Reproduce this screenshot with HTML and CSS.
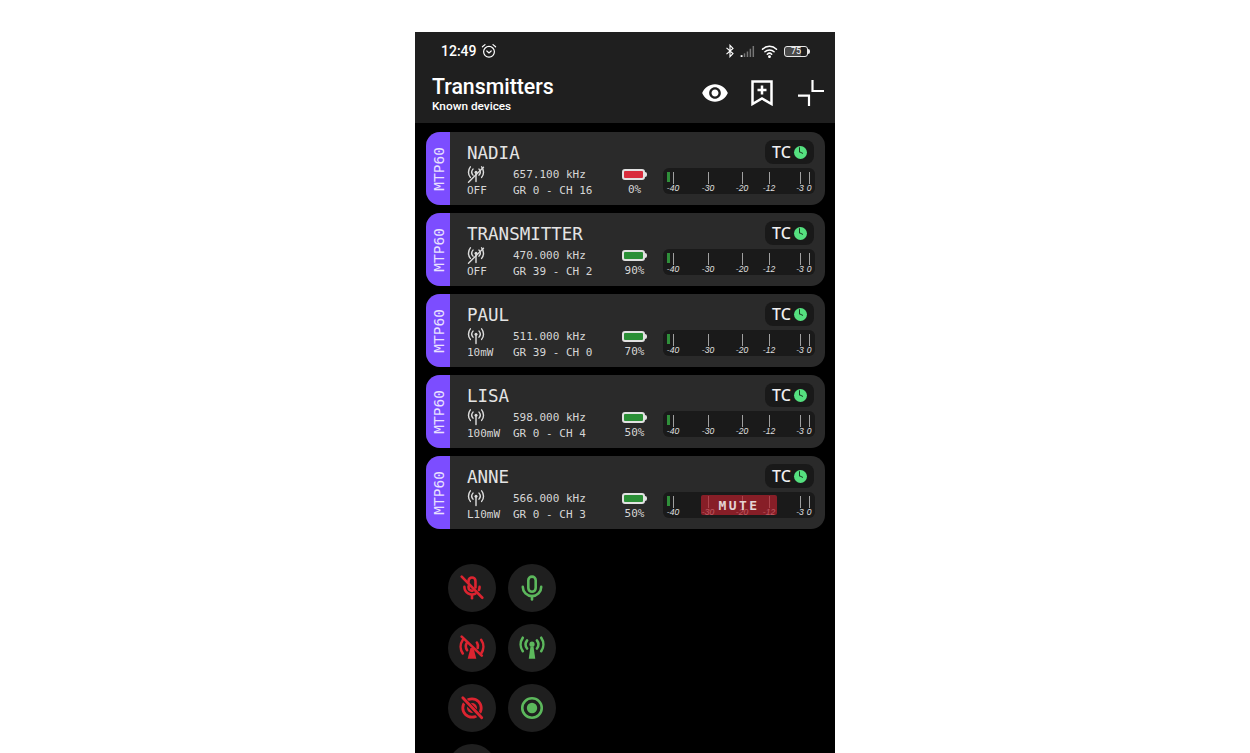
FILE: index.html
```html
<!DOCTYPE html>
<html lang="en">
<head>
    <meta charset="UTF-8">
    <meta name="viewport" content="width=device-width, initial-scale=1.0">
    <title>Transmitters</title>
    <link rel="stylesheet" href="styles.css">
</head>
<body>
    <svg class="icon-defs" width="0" height="0">
        <symbol id="ant-on" viewBox="0 0 24 24">
            <g fill="none" stroke="currentColor" stroke-width="1.9" stroke-linecap="round">
                <path d="M12 10v12"/>
                <path d="M8 5.5a6 6 0 0 0 0 8"/>
                <path d="M16 5.5a6 6 0 0 1 0 8"/>
                <path d="M4.5 2.5a11 11 0 0 0 0 14"/>
                <path d="M19.5 2.5a11 11 0 0 1 0 14"/>
            </g>
            <circle cx="12" cy="9.5" r="2" fill="currentColor"/>
        </symbol>
        <symbol id="ant-off" viewBox="0 0 24 24">
            <use href="#ant-on"/>
            <path d="M2 23 22 3" stroke="currentColor" stroke-width="1.8" stroke-linecap="round"/>
        </symbol>
    </svg>

    <div class="phone">
        <header class="app-header">
            <div class="status-bar">
                <span class="clock">12:49</span>
                <svg class="alarm" viewBox="0 0 16 16" fill="none" stroke="#fff" stroke-width="1.2" stroke-linecap="round">
                    <circle cx="8" cy="8.8" r="5.4"/>
                    <path d="M1.4 3.8 4 1.6M14.6 3.8 12 1.6M5.8 8l2.2 2 2.2-2"/>
                </svg>
                <div class="status-right">
                    <svg class="bt" viewBox="0 0 10 16" fill="none" stroke="#ffffff" stroke-width="1.3">
                        <path d="M1 4.5 8.4 11 5 14.5v-13L8.4 5 1 11.5"/>
                    </svg>
                    <svg class="signal" viewBox="0 0 16 12">
                        <rect x="0" y="10" width="2" height="2" fill="#fff"/>
                        <rect x="3.4" y="8" width="1.6" height="4" fill="#777"/>
                        <rect x="6.6" y="6" width="1.6" height="6" fill="#777"/>
                        <rect x="9.8" y="3" width="1.6" height="9" fill="#777"/>
                        <rect x="13" y="0" width="1.6" height="12" fill="#777"/>
                    </svg>
                    <svg class="wifi" viewBox="0 0 16 13" fill="none" stroke="#fff" stroke-width="1.5" stroke-linecap="round">
                        <path d="M1 4.2a10 10 0 0 1 14 0"/>
                        <path d="M3.4 6.8a6.6 6.6 0 0 1 9.2 0"/>
                        <path d="M5.8 9.2a3.2 3.2 0 0 1 4.4 0"/>
                        <circle cx="8" cy="11.6" r=".7" fill="#fff"/>
                    </svg>
                    <div class="phone-batt"><span>75</span></div>
                </div>
            </div>
            <div class="title-row">
                <div class="titles">
                    <h1>Transmitters</h1>
                    <p>Known devices</p>
                </div>
                <div class="actions">
                    <svg class="eye" viewBox="0 0 24 24" fill="#fff">
                        <path d="M12 4.5C7 4.5 2.73 7.61 1 12c1.73 4.39 6 7.5 11 7.5s9.27-3.11 11-7.5c-1.73-4.39-6-7.5-11-7.5zM12 17c-2.76 0-5-2.24-5-5s2.24-5 5-5 5 2.24 5 5-2.24 5-5 5zm0-8c-1.66 0-3 1.34-3 3s1.34 3 3 3 3-1.34 3-3-1.34-3-3-3z"/>
                    </svg>
                    <svg class="bookmark" viewBox="0 0 22 26" fill="none" stroke="#fff" stroke-width="2.5">
                        <path d="M1.5 1.5h19v22.5L11 18.5 1.5 24z"/>
                        <path d="M11 5.5v9M6.5 10h9"/>
                    </svg>
                    <svg class="collapse" viewBox="0 0 26 26" fill="none" stroke="#fff" stroke-width="2.2">
                        <path d="M14.5 0v11h11.5"/>
                        <path d="M0 15.7h11v10.3"/>
                    </svg>
                </div>
            </div>
        </header>

        <main class="card-list">
            <div class="card">
                <div class="card-tag"><span>MTP60</span></div>
                <div class="card-body">
                    <div class="card-top">
                        <span class="card-name">NADIA</span>
                        <div class="tc-pill">TC <span class="tc-clock"></span></div>
                    </div>
                    <div class="card-info">
                        <div class="power"><svg class="ant"><use href="#ant-off"/></svg><span>OFF</span></div>
                        <div class="freq"><span>657.100 kHz</span><span>GR 0 - CH 16</span></div>
                        <div class="batt-col"><div class="batt batt-red"></div><span>0%</span></div>
                        <div class="meter">
                            <i class="level"></i>
                            <b class="tick t40">-40</b><b class="tick t30">-30</b><b class="tick t20">-20</b><b class="tick t12">-12</b><b class="tick t3">-3</b><b class="tick t0">0</b>
                        </div>
                    </div>
                </div>
            </div>

            <div class="card">
                <div class="card-tag"><span>MTP60</span></div>
                <div class="card-body">
                    <div class="card-top">
                        <span class="card-name">TRANSMITTER</span>
                        <div class="tc-pill">TC <span class="tc-clock"></span></div>
                    </div>
                    <div class="card-info">
                        <div class="power"><svg class="ant"><use href="#ant-off"/></svg><span>OFF</span></div>
                        <div class="freq"><span>470.000 kHz</span><span>GR 39 - CH 2</span></div>
                        <div class="batt-col"><div class="batt"></div><span>90%</span></div>
                        <div class="meter">
                            <i class="level"></i>
                            <b class="tick t40">-40</b><b class="tick t30">-30</b><b class="tick t20">-20</b><b class="tick t12">-12</b><b class="tick t3">-3</b><b class="tick t0">0</b>
                        </div>
                    </div>
                </div>
            </div>

            <div class="card">
                <div class="card-tag"><span>MTP60</span></div>
                <div class="card-body">
                    <div class="card-top">
                        <span class="card-name">PAUL</span>
                        <div class="tc-pill">TC <span class="tc-clock"></span></div>
                    </div>
                    <div class="card-info">
                        <div class="power"><svg class="ant"><use href="#ant-on"/></svg><span>10mW</span></div>
                        <div class="freq"><span>511.000 kHz</span><span>GR 39 - CH 0</span></div>
                        <div class="batt-col"><div class="batt"></div><span>70%</span></div>
                        <div class="meter">
                            <i class="level"></i>
                            <b class="tick t40">-40</b><b class="tick t30">-30</b><b class="tick t20">-20</b><b class="tick t12">-12</b><b class="tick t3">-3</b><b class="tick t0">0</b>
                        </div>
                    </div>
                </div>
            </div>

            <div class="card">
                <div class="card-tag"><span>MTP60</span></div>
                <div class="card-body">
                    <div class="card-top">
                        <span class="card-name">LISA</span>
                        <div class="tc-pill">TC <span class="tc-clock"></span></div>
                    </div>
                    <div class="card-info">
                        <div class="power"><svg class="ant"><use href="#ant-on"/></svg><span>100mW</span></div>
                        <div class="freq"><span>598.000 kHz</span><span>GR 0 - CH 4</span></div>
                        <div class="batt-col"><div class="batt"></div><span>50%</span></div>
                        <div class="meter">
                            <i class="level"></i>
                            <b class="tick t40">-40</b><b class="tick t30">-30</b><b class="tick t20">-20</b><b class="tick t12">-12</b><b class="tick t3">-3</b><b class="tick t0">0</b>
                        </div>
                    </div>
                </div>
            </div>

            <div class="card">
                <div class="card-tag"><span>MTP60</span></div>
                <div class="card-body">
                    <div class="card-top">
                        <span class="card-name">ANNE</span>
                        <div class="tc-pill">TC <span class="tc-clock"></span></div>
                    </div>
                    <div class="card-info">
                        <div class="power"><svg class="ant"><use href="#ant-on"/></svg><span>L10mW</span></div>
                        <div class="freq"><span>566.000 kHz</span><span>GR 0 - CH 3</span></div>
                        <div class="batt-col"><div class="batt"></div><span>50%</span></div>
                        <div class="meter">
                            <i class="level"></i>
                            <b class="tick t40">-40</b><b class="tick t30">-30</b><b class="tick t20">-20</b><b class="tick t12">-12</b><b class="tick t3">-3</b><b class="tick t0">0</b>
                            <div class="mute">MUTE</div>
                        </div>
                    </div>
                </div>
            </div>
        </main>

        <section class="button-grid">
            <div class="round-btn red">
                <svg viewBox="0 0 24 24" fill="none" stroke="currentColor" stroke-width="2.4" stroke-linecap="round">
                    <path d="M8.8 6.5V5.5a3.2 3.2 0 0 1 6.4 0v6"/>
                    <path d="M8.8 10.5v1a3.2 3.2 0 0 0 3.8 3.1"/>
                    <path d="M5 11a7 7 0 0 0 10.2 6.2M19 11a7 7 0 0 1-.6 2.8"/>
                    <path d="M12 19v2.5"/>
                    <path d="M2.5 1.5 21.5 21"/>
                </svg>
            </div>
            <div class="round-btn green">
                <svg viewBox="0 0 24 24" fill="none" stroke="currentColor" stroke-width="2.4" stroke-linecap="round">
                    <rect x="8.6" y="1.5" width="6.8" height="14" rx="3.4"/>
                    <path d="M3.5 11a8.5 8.5 0 0 0 17 0"/>
                    <path d="M12 19.5v3"/>
                </svg>
            </div>
            <div class="round-btn red">
                <svg viewBox="0 0 24 24" fill="none" stroke="currentColor" stroke-width="2.4" stroke-linecap="round">
                    <path d="M10.6 12h2.8l2.6 10H8z" fill="currentColor" stroke="none"/>
                    <path d="M7.5 7a6 6 0 0 0 0 7M16.5 7a6 6 0 0 1 .8 5"/>
                    <path d="M3.5 4.5a11 11 0 0 0 0 12.5M20.5 4.5a11 11 0 0 1 0 12.5"/>
                    <path d="M2.5 1.5 21 19"/>
                </svg>
            </div>
            <div class="round-btn green">
                <svg viewBox="0 0 24 24" fill="none" stroke="currentColor" stroke-width="2.4" stroke-linecap="round">
                    <path d="M10.6 10.5h2.8l1.6 11.5H9z" fill="currentColor" stroke="none"/>
                    <circle cx="12" cy="8.5" r="2.4" fill="currentColor" stroke="none"/>
                    <path d="M7.5 5a6 6 0 0 0 0 7.5M16.5 5a6 6 0 0 1 0 7.5"/>
                    <path d="M3.5 2.5a11 11 0 0 0 0 12.5M20.5 2.5a11 11 0 0 1 0 12.5"/>
                </svg>
            </div>
            <div class="round-btn red">
                <svg viewBox="0 0 24 24" fill="none" stroke="currentColor" stroke-width="2.6" stroke-linecap="round">
                    <circle cx="12" cy="12" r="8.5"/>
                    <circle cx="12" cy="12" r="4.6" fill="currentColor" stroke="none"/>
                    <path d="M3 2.5 21 21.5" stroke-width="4.6" stroke="#1f1f1f"/>
                    <path d="M3.5 2.5 21 21"/>
                </svg>
            </div>
            <div class="round-btn green">
                <svg viewBox="0 0 24 24" fill="none" stroke="currentColor" stroke-width="2.4">
                    <circle cx="12" cy="12" r="9"/>
                    <circle cx="12" cy="12" r="4.8" fill="currentColor" stroke="none"/>
                </svg>
            </div>
            <div class="round-btn"></div>
        </section>
    </div>
</body>
</html>
```

FILE: styles.css
```css
html, body {
    height: 100%;
}
body {
    margin: 0;
    background-color: #ffffff;
    overflow: hidden;
    font-family: "DejaVu Sans Mono", monospace;
}
.icon-defs {
    position: absolute;
}
.phone {
    width: 420px;
    height: 721px;
    margin: 32px auto 0;
    background-color: #000000;
    overflow: hidden;
}

/* header */
.app-header {
    height: 91px;
    background-color: #1f1f1f;
    font-family: Roboto, sans-serif;
    color: #ffffff;
}
.status-bar {
    display: flex;
    align-items: center;
    height: 38px;
    padding: 0 27px 0 26px;
}
.clock {
    font-size: 14px;
    font-weight: 500;
}
.alarm {
    width: 16px;
    height: 16px;
    margin-left: 4px;
}
.status-right {
    display: flex;
    align-items: center;
    margin-left: auto;
}
.bt {
    width: 10px;
    height: 14px;
}
.signal {
    width: 16px;
    height: 11px;
    margin-left: 5px;
}
.wifi {
    width: 17px;
    height: 13px;
    margin-left: 5px;
}
.phone-batt {
    position: relative;
    width: 22px;
    height: 9px;
    margin-left: 6px;
    border: 1px solid #e8e8e8;
    border-radius: 3px;
    background: linear-gradient(to right, #4a4a4a 75%, transparent 75%);
    font-size: 9px;
    line-height: 9px;
    text-align: center;
    color: #ffffff;
}
.phone-batt::after {
    content: "";
    position: absolute;
    right: -3px;
    top: 2px;
    width: 2px;
    height: 5px;
    background-color: #e8e8e8;
    border-radius: 0 2px 2px 0;
}
.title-row {
    display: flex;
    justify-content: space-between;
    padding: 0 11px 0 17px;
}
.titles h1 {
    margin: 3px 0 0;
    font-size: 21.3px;
    font-weight: 500;
    line-height: 27px;
}
.titles p {
    margin: 0;
    font-size: 11.8px;
    font-weight: 500;
    line-height: 12px;
}
.actions {
    display: flex;
    align-items: center;
    height: 46px;
}
.eye {
    width: 28px;
    height: 28px;
}
.bookmark {
    width: 22px;
    height: 26px;
    margin-left: 22px;
}
.collapse {
    width: 26px;
    height: 26px;
    margin-left: 25px;
}

/* cards */
.card-list {
    display: flex;
    flex-direction: column;
    gap: 8px;
    padding: 9px 10px 0 11px;
}
.card {
    display: flex;
    height: 73px;
    background-color: #2a2a2a;
    border-radius: 14px;
    overflow: hidden;
}
.card-tag {
    display: flex;
    align-items: center;
    justify-content: center;
    width: 23px;
    padding-left: 1px;
    flex-shrink: 0;
    background-color: #7c4dff;
    color: #e9e0ff;
    font-size: 14.5px;
}
.card-tag span {
    writing-mode: vertical-rl;
    transform: rotate(180deg);
}
.card-body {
    flex: 1;
    padding: 8px 10px 0 17px;
    color: #d6d6d6;
}
.card-top {
    display: flex;
    justify-content: space-between;
    height: 24px;
}
.card-name {
    font-size: 17.5px;
    line-height: 26px;
    color: #e4e4e4;
}
.tc-pill {
    display: flex;
    align-items: center;
    justify-content: center;
    gap: 3px;
    width: 49px;
    height: 24px;
    margin-right: 1px;
    background-color: #191919;
    border-radius: 8px;
    font-family: "Noto Sans", sans-serif;
    font-size: 16px;
    font-weight: 500;
    color: #f0f0f0;
}
.tc-clock {
    position: relative;
    width: 13px;
    height: 13px;
    background-color: #55e07f;
    border-radius: 50%;
}
.tc-clock::after {
    content: "";
    position: absolute;
    left: 5px;
    top: 2px;
    width: 3px;
    height: 4px;
    border-left: 1.5px solid #1a3a22;
    border-bottom: 1.5px solid #1a3a22;
    transform: skewY(25deg);
}
.card-info {
    display: flex;
    margin-top: 1px;
    font-size: 11px;
}
.power {
    display: flex;
    flex-direction: column;
    width: 46px;
}
.ant {
    width: 18px;
    height: 18px;
    color: #dcdcdc;
}
.power span {
    line-height: 16px;
}
.freq {
    display: flex;
    flex-direction: column;
    width: 109px;
    padding-top: 2px;
    line-height: 16px;
}
.batt-col {
    display: flex;
    flex-direction: column;
    align-items: center;
    width: 23px;
    padding-top: 4px;
}
.batt-col span {
    margin: 2px 0 0 2px;
    line-height: 16px;
    white-space: nowrap;
}
.batt {
    position: relative;
    width: 19px;
    height: 7px;
    border: 2px solid #e2e2e2;
    border-radius: 3px;
    background-color: #2a8f36;
}
.batt::after {
    content: "";
    position: absolute;
    right: -4px;
    top: 1px;
    width: 2px;
    height: 5px;
    background-color: #e2e2e2;
    border-radius: 0 2px 2px 0;
}
.batt-red {
    background-color: #d92c3c;
}

/* level meter */
.meter {
    position: relative;
    width: 152px;
    height: 26px;
    margin: 3px 0 0 18px;
    background-color: #1a1a1a;
    border-radius: 6px;
}
.level {
    position: absolute;
    left: 4px;
    top: 4px;
    width: 3px;
    height: 10px;
    background-color: #2f8f3a;
}
.tick {
    position: absolute;
    top: 4px;
    width: 20px;
    margin-left: -10px;
    padding-top: 12px;
    font-family: "Liberation Sans", sans-serif;
    font-size: 8.5px;
    font-style: italic;
    font-weight: normal;
    line-height: 9px;
    text-align: center;
    color: #e0e0e0;
}
.tick::before {
    content: "";
    position: absolute;
    left: 9.5px;
    top: 0;
    width: 1px;
    height: 12px;
    background-color: #a0a0a0;
}
.t40 { left: 10px; }
.t30 { left: 45px; }
.t20 { left: 79px; }
.t12 { left: 106px; }
.t3 { left: 137px; }
.t0 { left: 146px; }
.mute {
    position: absolute;
    left: 38px;
    top: 3px;
    width: 76px;
    height: 20px;
    background-color: rgba(178, 32, 44, 0.72);
    border-radius: 2px;
    font-size: 13px;
    font-weight: bold;
    line-height: 21px;
    letter-spacing: 2.4px;
    text-align: center;
    color: #e4d4d4;
}

/* round buttons */
.button-grid {
    display: grid;
    grid-template-columns: 48px 48px;
    gap: 12px;
    padding: 35px 0 0 33px;
}
.round-btn {
    display: flex;
    align-items: center;
    justify-content: center;
    width: 48px;
    height: 48px;
    background-color: #1f1f1f;
    border-radius: 50%;
}
.round-btn svg {
    width: 26px;
    height: 26px;
}
.red {
    color: #dc2430;
}
.green {
    color: #5cb85c;
}
```
